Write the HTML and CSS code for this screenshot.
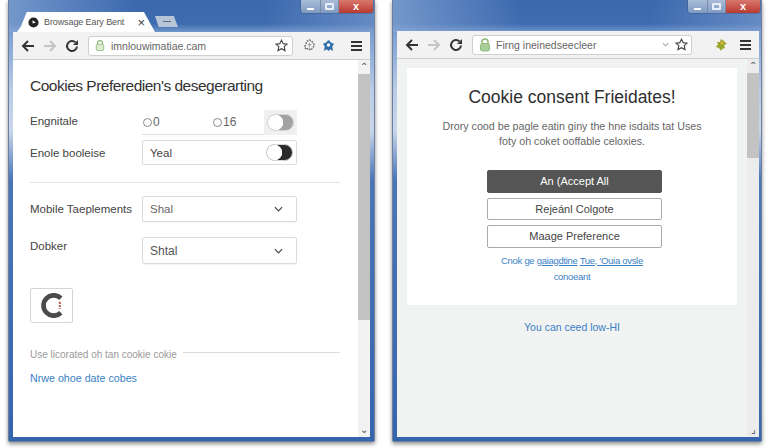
FILE: index.html
```html
<!DOCTYPE html>
<html lang="en">
<head>
    <meta charset="UTF-8">
    <meta name="viewport" content="width=device-width, initial-scale=1.0">
    <title>Cookie consent</title>
    <link rel="stylesheet" href="styles.css">
</head>
<body>
    <!-- Left window: preferences -->
    <div class="window window-left">
        <div class="titlebar">
            <div class="tab">
                <svg class="tab-icon" viewBox="0 0 12 12"><circle cx="6" cy="6" r="5.5" fill="#222"/><path d="M5 3.5 8.5 6 5 7z" fill="#fff"/></svg>
                <span class="tab-title">Browsage Eary Bent</span>
                <span class="tab-close">×</span>
            </div>
            <div class="new-tab"><span></span></div>
            <div class="controls">
                <span class="ctl ctl-a"><i class="ctl-min"></i></span>
                <span class="ctl ctl-b"><i class="ctl-max"></i></span>
                <span class="ctl ctl-close">x</span>
            </div>
        </div>
        <div class="toolbar">
            <svg class="nav" viewBox="0 0 14 14"><path d="M13 7H2M7 2 2 7l5 5" fill="none" stroke="#333" stroke-width="2"/></svg>
            <svg class="nav" viewBox="0 0 14 14"><path d="M1 7h11M7 2l5 5-5 5" fill="none" stroke="#c4c4c4" stroke-width="2"/></svg>
            <svg class="nav" viewBox="0 0 14 14"><path d="M12 7.5A5 5 0 1 1 10.5 3.4" fill="none" stroke="#333" stroke-width="2"/><path d="M13 1v5H8z" fill="#333"/></svg>
            <div class="address">
                <svg class="lock" viewBox="0 0 12 14"><path d="M3 6V4a3 3 0 0 1 6 0v2" fill="none" stroke="#8db87a" stroke-width="1.5"/><rect x="1.5" y="5.5" width="9" height="7.5" rx="2" fill="#dcebd2" stroke="#8db87a"/></svg>
                <span class="url">imnlouwimatiae.cam</span>
                <svg class="star" viewBox="0 0 14 14"><path d="M7 1.2 8.8 5l4.200.5-3.100 2.800.9 4.200L7 10.400l-3.800 2.100.9-4.200L1 5.500 5.200 5z" fill="none" stroke="#444" stroke-width="1.200"/></svg>
            </div>
            <svg class="ext ext-first" viewBox="0 0 14 14"><path d="M4 2.500 7 1l3 2 2 3-1 3-3 3-2-2-3 1-1-3 1-2z" fill="none" stroke="#777" stroke-width="1.600" stroke-dasharray="2 1"/><path d="M5 6h4M7 4v5" stroke="#999"/></svg>
            <svg class="ext" viewBox="0 0 14 14"><path d="M7 1 10 4l3 1-2 3 1 5-3-2-2 2-2-2-3 2 1-5-2-3 3-1z" fill="#2f6fa8"/><circle cx="7" cy="6.500" r="1.800" fill="#fff"/></svg>
            <div class="menu"><span></span><span></span><span></span></div>
        </div>
        <div class="viewport">
            <div class="page">
                <h1 class="pref-title">Cookies Preferedien's desegerarting</h1>
                <div class="pref-row pref-row-first">
                    <span class="pref-label">Engnitale</span>
                    <div class="pref-radio">
                        <span class="radio radio-first"><i></i>0</span>
                        <span class="radio"><i></i>16</span>
                        <span class="toggle-wrap"><span class="toggle"></span></span>
                    </div>
                </div>
                <div class="pref-row pref-row-second">
                    <span class="pref-label">Enole booleise</span>
                    <div class="field field-toggle">
                        <span>Yeal</span>
                        <span class="toggle toggle-on"></span>
                    </div>
                </div>
                <hr class="rule">
                <div class="pref-row pref-row-third">
                    <span class="pref-label">Mobile Taeplements</span>
                    <div class="field field-select">
                        <span class="muted">Shal</span>
                        <svg class="chev" viewBox="0 0 10 6"><path d="M1 1l4 4 4-4" fill="none" stroke="#444" stroke-width="1.300"/></svg>
                    </div>
                </div>
                <div class="pref-row pref-row-fourth">
                    <span class="pref-label pref-label-top">Dobker</span>
                    <div class="field field-select field-tall">
                        <span>Shtal</span>
                        <svg class="chev" viewBox="0 0 10 6"><path d="M1 1l4 4 4-4" fill="none" stroke="#444" stroke-width="1.300"/></svg>
                    </div>
                </div>
                <div class="logo-box">
                    <svg viewBox="0 0 24 24" width="25" height="25"><path d="M21 5A9.800 9.800 0 1 0 21 19" fill="none" stroke="#4a4a4a" stroke-width="4.500"/><path d="M20 8.500v6.500" stroke="#b5605a" stroke-width="2" stroke-dasharray="2 1"/></svg>
                </div>
                <div class="note-row">
                    <span>Use licorated oh tan cookie cokie</span>
                    <i></i>
                </div>
                <a class="pref-link" href="#">Nrwe ohoe date cobes</a>
            </div>
            <div class="scrollbar">
                <span class="arrow">⌃</span>
                <div class="track"><div class="thumb thumb-long"></div></div>
                <span class="arrow">⌄</span>
            </div>
        </div>
    </div>

    <!-- Right window: consent -->
    <div class="window window-right">
        <div class="titlebar titlebar-plain">
            <div class="controls">
                <span class="ctl ctl-a"><i class="ctl-min"></i></span>
                <span class="ctl ctl-b"><i class="ctl-max"></i></span>
                <span class="ctl ctl-close">x</span>
            </div>
        </div>
        <div class="toolbar">
            <svg class="nav" viewBox="0 0 14 14"><path d="M13 7H2M7 2 2 7l5 5" fill="none" stroke="#333" stroke-width="2"/></svg>
            <svg class="nav" viewBox="0 0 14 14"><path d="M1 7h11M7 2l5 5-5 5" fill="none" stroke="#c4c4c4" stroke-width="2"/></svg>
            <svg class="nav" viewBox="0 0 14 14"><path d="M12 7.500A5 5 0 1 1 10.500 3.400" fill="none" stroke="#333" stroke-width="2"/><path d="M13 1v5H8z" fill="#333"/></svg>
            <div class="address address-wide">
                <svg class="lock" viewBox="0 0 12 14"><path d="M3 6V4a3 3 0 0 1 6 0v2" fill="none" stroke="#8db87a" stroke-width="1.500"/><rect x="1.500" y="5.500" width="9" height="7.500" rx="2" fill="#a9cf98" stroke="#8db87a"/></svg>
                <span class="url">Firng ineinedseecleer</span>
                <svg class="addr-chev" viewBox="0 0 10 6"><path d="M1 1l4 4 4-4" fill="none" stroke="#666" stroke-width="1.200"/></svg>
                <svg class="star star-right" viewBox="0 0 14 14"><path d="M7 1.200 8.800 5l4.200.5-3.100 2.800.9 4.200L7 10.400l-3.800 2.100.9-4.200L1 5.500 5.200 5z" fill="none" stroke="#444" stroke-width="1.200"/></svg>
            </div>
            <svg class="ext ext-leaf" viewBox="0 0 14 14"><path d="M7 1l3 2 3 3-3 1 1 3-3 1-1 2-2-3-3-1 2-3-1-2 3 0z" fill="#9aa52e"/><circle cx="8" cy="5" r="1.500" fill="#e0b93a"/></svg>
            <div class="menu"><span></span><span></span><span></span></div>
        </div>
        <div class="viewport viewport-grey">
            <div class="page page-consent">
                <div class="card">
                    <h1 class="card-title">Cookie consent Frieidates!</h1>
                    <p class="card-text">Drory cood be pagle eatin giny the hne isdaits tat Uses<br>foty oh coket ooffable celoxies.</p>
                    <div class="btn btn-dark">An (Accept All</div>
                    <div class="btn">Rejeánl Colgote</div>
                    <div class="btn">Maage Preference</div>
                    <p class="card-link">Cnok ge <u>gaiagdtine</u> <u>Tue, 'Ouia ovsle</u><br>conoeant</p>
                </div>
                <a class="after-link" href="#">You can ceed low-HI</a>
            </div>
            <div class="scrollbar scrollbar-right">
                <span class="arrow">⌃</span>
                <div class="track"><div class="thumb thumb-short"></div></div>
                <span class="arrow arrow-grip">⌟</span>
            </div>
        </div>
    </div>
</body>
</html>
```
FILE: styles.css
```css
* {
    margin: 0;
    padding: 0;
    box-sizing: border-box;
}
body {
    width: 768px;
    height: 448px;
    overflow: hidden;
    background: #fff;
    display: flex;
    gap: 17px;
    padding-left: 8px;
    font-family: "Liberation Sans", Arial, sans-serif;
    color: #333;
}

/* window frame */
.window {
    height: 442px;
    padding: 0 4px 4px;
    display: flex;
    flex-direction: column;
    border-radius: 0 0 2px 2px;
    border: 1px solid #6d7f9c;
    border-top: none;
    background:
        linear-gradient(to right, rgba(140, 170, 215, 0.7), rgba(140, 170, 215, 0) 35%, rgba(140, 170, 215, 0) 70%, rgba(140, 170, 215, 0.5)) no-repeat 0 0 / 100% 32px,
        linear-gradient(to bottom, #3a68ae 0, #3f6cb0 24px, #7da0d2 34px, #b9cbe6 90px, #c9d7ea 130px, #4a76b8 180px, #3566ad 100%);
    box-shadow: 0 2px 4px rgba(0, 0, 0, 0.45);
}
.window-left {
    width: 367px;
}
.window-right {
    width: 370px;
    padding-right: 2px;
}
.titlebar {
    height: 32px;
    flex: none;
    display: flex;
    align-items: flex-end;
    padding-left: 4px;
    position: relative;
}
.titlebar-plain {
    height: 31px;
}
.tab {
    width: 138px;
    height: 20px;
    background: #fff;
    clip-path: polygon(0 100%, 3% 70%, 7% 0, 92% 0, 100% 100%);
    display: flex;
    align-items: center;
    padding: 0 10px 0 11px;
    font-size: 9px;
    letter-spacing: -0.1px;
    color: #555;
}
.tab-icon {
    width: 11px;
    height: 11px;
    margin-right: 5px;
    flex: none;
}
.tab-title {
    flex: 1;
    white-space: nowrap;
}
.tab-close {
    font-size: 13px;
    color: #444;
}
.new-tab {
    width: 23px;
    height: 11px;
    margin: 0 0 5px 0;
    background: #b7c5d8;
    clip-path: polygon(0 0, 82% 0, 100% 100%, 16% 100%);
    display: flex;
    align-items: center;
    justify-content: center;
}
.new-tab span {
    width: 8px;
    height: 1px;
    background: #667;
}
.controls {
    position: absolute;
    top: 0;
    right: -3px;
    display: flex;
    height: 13px;
    border-radius: 0 0 3px 3px;
    overflow: hidden;
    box-shadow: 0 0 0 1px rgba(60, 80, 120, 0.4);
}
.window-right .controls {
    right: -1px;
}
.ctl {
    height: 13px;
    display: flex;
    align-items: center;
    justify-content: center;
    background: linear-gradient(to bottom, #a9bcd8, #7f9ac2);
    border-right: 1px solid #7b8ba6;
}
.ctl-a {
    width: 20px;
}
.ctl-b {
    width: 18px;
}
.ctl-min {
    width: 7px;
    height: 2px;
    margin-top: 5px;
    background: #fff;
}
.ctl-max {
    width: 9px;
    height: 7px;
    border: 2px solid #e8eef6;
    border-radius: 1px;
}
.ctl-close {
    width: 34px;
    border: none;
    background: linear-gradient(to bottom, #d9776d, #b83a30);
    color: #fff;
    font-size: 11px;
    font-weight: 700;
    line-height: 11px;
}

/* toolbar */
.toolbar {
    height: 28px;
    flex: none;
    background: #f2f2f2;
    border-bottom: 1px solid #cfcfcf;
    display: flex;
    align-items: center;
    padding-left: 8px;
}
.nav {
    width: 14px;
    height: 14px;
    margin-right: 8px;
    flex: none;
}
.address {
    width: 205px;
    height: 20px;
    margin-left: 1px;
    background: #fff;
    border: 1px solid #cfcfcf;
    border-radius: 3px;
    display: flex;
    align-items: center;
    padding: 0 4px 0 6px;
}
.address-wide {
    width: 220px;
    padding-right: 3px;
}
.lock {
    width: 10px;
    height: 13px;
    margin-right: 6px;
    flex: none;
}
.address-wide .lock {
    width: 12px;
    height: 14px;
    margin-right: 5px;
}
.url {
    flex: 1;
    font-size: 10.5px;
    color: #666;
    white-space: nowrap;
}
.star {
    width: 13px;
    height: 13px;
    flex: none;
}
.addr-chev {
    width: 7px;
    height: 5px;
    margin-right: 6px;
    flex: none;
}
.ext {
    width: 13px;
    height: 13px;
    margin-left: 6px;
    flex: none;
}
.ext-first {
    margin-left: 10px;
}
.ext-leaf {
    width: 14px;
    height: 14px;
    margin-left: 22px;
}
.menu {
    margin-left: auto;
    margin-right: 8px;
    width: 11px;
    display: flex;
    flex-direction: column;
    gap: 2px;
}
.menu span {
    height: 2px;
    background: #333;
}

/* page area */
.viewport {
    flex: 1;
    min-height: 0;
    background: #fff;
    display: flex;
}
.viewport-grey {
    background: #f1f2f2;
}
.page {
    flex: 1;
    min-width: 0;
    padding: 15px 0 0 17px;
}
.scrollbar {
    width: 12px;
    flex: none;
    background: #f2f2f2;
    display: flex;
    flex-direction: column;
    align-items: center;
}
.scrollbar-right {
    background: #ececec;
}
.arrow {
    height: 14px;
    font-size: 10px;
    line-height: 14px;
    color: #555;
}
.arrow-grip {
    color: #444;
}
.track {
    flex: 1;
    width: 100%;
}
.thumb {
    background: #c3c3c3;
    width: 100%;
}
.thumb-long {
    height: 246px;
}
.thumb-short {
    height: 85px;
}

/* preferences */
.pref-title {
    font-size: 15.5px;
    letter-spacing: -0.5px;
    line-height: 22px;
    font-weight: 400;
    color: #333;
    white-space: nowrap;
}
.pref-row {
    display: flex;
    align-items: center;
    width: 267px;
    font-size: 11.5px;
    color: #444;
}
.pref-row-first {
    margin-top: 13px;
    height: 25px;
}
.pref-row-first .pref-label {
    margin-top: -3px;
}
.pref-row-second {
    margin-top: 5px;
}
.pref-row-third {
    margin-top: 0;
}
.pref-row-fourth {
    margin-top: 15px;
    align-items: flex-start;
}
.pref-label {
    width: 112px;
    flex: none;
    white-space: nowrap;
}
.pref-label-top {
    margin-top: 3px;
}
.pref-radio {
    flex: 1;
    height: 25px;
    display: flex;
    align-items: center;
    border-bottom: 1px solid #dedede;
    font-size: 12px;
}
.radio {
    display: flex;
    align-items: center;
    width: 71px;
    flex: none;
    color: #666;
}
.radio-first {
    padding-left: 1px;
}
.radio i {
    width: 9px;
    height: 9px;
    border: 1px solid #888;
    border-radius: 50%;
    margin-right: 1px;
}
.pref-radio .radio:nth-child(2) {
    width: 51px;
}
.toggle-wrap {
    width: 33px;
    height: 25px;
    background: #f0f0f0;
    display: flex;
    align-items: center;
    justify-content: center;
}
.toggle {
    display: block;
    width: 27px;
    height: 17px;
    border-radius: 9px;
    background: radial-gradient(circle at 7.5px 7.5px, #fff 7.5px, transparent 8px), #a3a3a3;
    border: 1px solid #d6d6d6;
}
.toggle-on {
    background: radial-gradient(circle at 7.5px 7.5px, #fff 7.5px, transparent 8px), #2b2b2b;
}
.field {
    flex: 1;
    background: #fff;
    border: 1px solid #dcdcdc;
    border-radius: 2px;
    display: flex;
    align-items: center;
    justify-content: space-between;
    padding: 0 3px 0 7px;
    height: 25px;
    font-size: 11.5px;
}
.field-select {
    height: 26px;
    padding-right: 13px;
    box-shadow: 0 1px 1px rgba(0, 0, 0, 0.05);
}
.field-tall {
    height: 27px;
    font-size: 12px;
    color: #555;
}
.muted {
    color: #666;
}
.chev {
    width: 9px;
    height: 6px;
}
.rule {
    width: 310px;
    border: none;
    border-top: 1px solid #e2e2e2;
    margin: 17px 0 13px;
}
.logo-box {
    width: 43px;
    height: 35px;
    margin-top: 24px;
    background: #fff;
    border: 1px solid #d4d4d4;
    border-radius: 2px;
    display: flex;
    align-items: center;
    justify-content: center;
}
.note-row {
    width: 310px;
    margin-top: 24px;
    display: flex;
    font-size: 10px;
    line-height: 16px;
    color: #999;
    white-space: nowrap;
}
.note-row i {
    flex: 1;
    height: 1px;
    margin: 5px 0 0 6px;
    background: #dcdcdc;
}
.pref-link {
    display: block;
    margin-top: 7px;
    font-size: 10.7px;
    line-height: 16px;
    color: #3b7fc4;
    text-decoration: none;
}

/* consent */
.page-consent {
    padding: 9px 10px 0;
    text-align: center;
}
.card {
    height: 237px;
    background: #fff;
    padding-top: 17px;
    display: flex;
    flex-direction: column;
    align-items: center;
}
.card-title {
    font-size: 17.5px;
    line-height: 24px;
    font-weight: 400;
    color: #2e2e2e;
    white-space: nowrap;
}
.card-text {
    margin: 10px 0 21px;
    font-size: 10.7px;
    line-height: 15px;
    color: #666;
    white-space: nowrap;
}
.btn {
    width: 175px;
    height: 22.5px;
    margin: 0 0 5px 5px;
    border: 1px solid #aaa;
    border-radius: 2px;
    display: flex;
    align-items: center;
    justify-content: center;
    font-size: 11px;
    color: #444;
    background: #fff;
}
.btn-dark {
    background: #555;
    border-color: #555;
    color: #fff;
}
.card-link {
    margin-top: 0;
    font-size: 9.5px;
    letter-spacing: -0.3px;
    line-height: 16px;
    color: #3b7fc4;
    white-space: nowrap;
}
.after-link {
    display: block;
    margin-top: 14px;
    font-size: 10.5px;
    line-height: 16px;
    color: #3b7fc4;
    text-decoration: none;
}
```
